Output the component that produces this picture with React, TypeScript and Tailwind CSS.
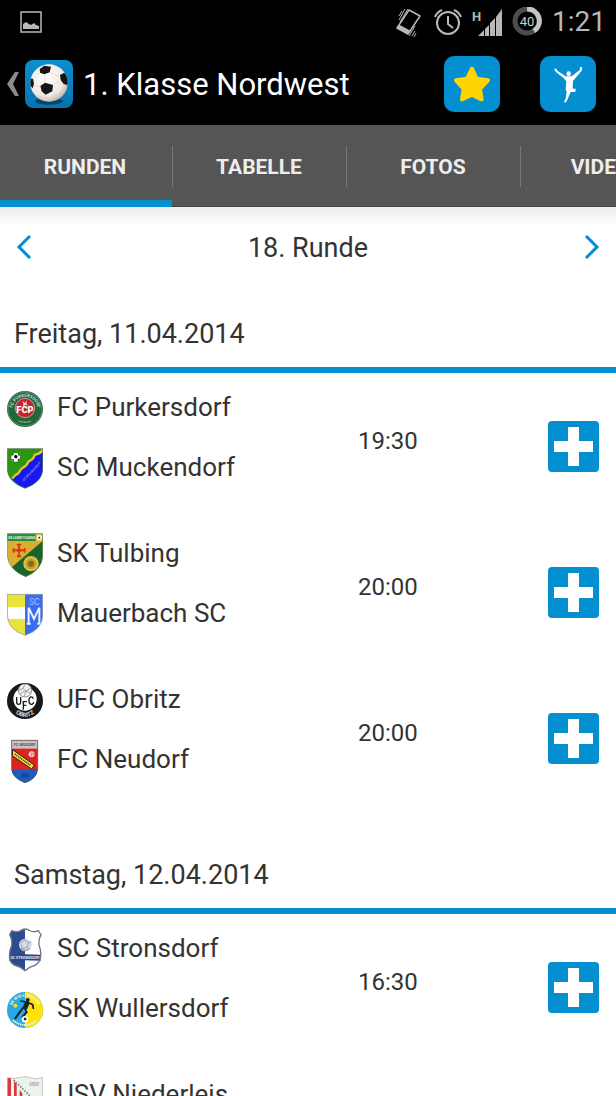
import { useState } from "react";
import type { ReactNode } from "react";
import clsx from "clsx";

interface Team {
  name: string;
  crest: ReactNode;
}

interface Match {
  home: Team;
  away: Team;
  time: string;
}

interface MatchDay {
  date: string;
  matches: Match[];
}

function Crest({ children }: { children: ReactNode }) {
  return (
    <svg viewBox="0 0 108 132" className="w-9 h-11 shrink-0" fontFamily="Roboto, sans-serif" aria-hidden="true">
      {children}
    </svg>
  );
}

const purkersdorf = (
  <Crest>
    <circle cx="54" cy="66" r="54" fill="#22663a" />
    <circle cx="54" cy="66" r="51" fill="none" stroke="#7aa585" strokeWidth="2" />
    <path id="purk-top" d="M17 76A38 38 0 1 1 91 76" fill="none" />
    <text fontSize="13" fontWeight="700" fill="#c9dccc">
      <textPath href="#purk-top" startOffset="50%" textAnchor="middle">FC PURKERSDORF</textPath>
    </text>
    <circle cx="54" cy="63" r="29" fill="#c4242c" stroke="#e9cfcf" strokeWidth="2" />
    <path d="M47 42l6 6 7-7-2 9 5 5-9-1-6 5 1-8z" fill="#f3dddd" />
    <text x="54" y="78" fontSize="28" fontWeight="900" fill="#fff" textAnchor="middle">FCP</text>
    <path d="M36 102q18 7 36 0" fill="none" stroke="#8fb898" strokeWidth="5" strokeDasharray="3 2" />
  </Crest>
);

const muckendorf = (
  <Crest>
    <path d="M1 5H107V66Q107 104 54 124Q1 104 1 66Z" fill="#2a9612" />
    <path d="M107 12Q99 24 84 26Q78 42 64 47Q58 61 46 66Q38 74 34 82Q24 86 16 96Q28 112 54 124Q107 104 107 66Z" fill="#1717f2" />
    <path d="M107 9Q99 21 84 23Q78 39 64 44Q58 58 46 63Q38 71 34 79Q24 83 16 94" fill="none" stroke="#f2c41b" strokeWidth="7" />
    <circle cx="26" cy="31" r="13" fill="#fff" />
    <path d="M21 27l5-4 6 4-2 7h-7zM14 23l5-4v7zM34 20l5 6-6-1zM15 36l6 1-1 6zM38 34l-3 8-4-4z" fill="#111" />
    <text x="50" y="104" fontSize="11" fill="#b9b9d8" transform="rotate(-47 50 104)">SC Muckendorf</text>
    <path d="M1 5H107V66Q107 104 54 124Q1 104 1 66Z" fill="none" stroke="#4c6a52" strokeWidth="2" />
  </Crest>
);

const tulbing = (
  <Crest>
    <path d="M1 2H107V70Q104 112 56 131Q6 112 1 70Z" fill="#dcae2e" />
    <path d="M107 24V70Q104 112 56 131Q30 121 15 102Z" fill="#17642e" />
    <path d="M1 2H107V24H1Z" fill="#2e8b3d" />
    <text x="4" y="17" fontSize="9" fontWeight="700" fill="#f4f4df">SK LAGER TULBING</text>
    <path d="M86 2H107V24H86Z" fill="#d7c444" />
    <circle cx="97" cy="14" r="8" fill="#f5f5ee" />
    <circle cx="97" cy="14" r="3" fill="#333" />
    <path d="M36 34V72M18 52H54" stroke="#d9331d" strokeWidth="5" />
    <path d="M32 35H40M32 70H40M20 48V56M53 48V56" stroke="#d9331d" strokeWidth="6" strokeLinecap="round" />
    <circle cx="36" cy="52" r="6" fill="#d9331d" />
    <circle cx="72" cy="92" r="23" fill="#dfc044" />
    <circle cx="72" cy="92" r="16" fill="#c99b23" />
    <circle cx="72" cy="92" r="9" fill="#7f6b24" />
    <path d="M1 2H107V70Q104 112 56 131Q6 112 1 70Z" fill="none" stroke="#71884e" strokeWidth="2" />
  </Crest>
);

const mauerbach = (
  <Crest>
    <path d="M1 4H54V127Q1 110 1 66Z" fill="#e8e43a" />
    <path d="M54 4H107V66Q107 110 54 127Z" fill="#3b6cf0" />
    <path d="M2 43H54V78H4Z" fill="#fff" />
    <text x="82" y="35" fontSize="25" fill="#a9c2fb" textAnchor="middle">SC</text>
    <path d="M65 92V44L81 78L97 44V92M59 92H71M91 92H103" fill="none" stroke="#e8effd" strokeWidth="6" />
    <path d="M1 4H107V66Q107 110 54 127Q1 110 1 66Z" fill="none" stroke="#8794a4" strokeWidth="2" />
  </Crest>
);

const obritz = (
  <Crest>
    <circle cx="54" cy="66" r="54" fill="#15191b" />
    <circle cx="54" cy="60" r="35" fill="#fff" />
    <circle cx="54" cy="34" r="20" fill="#f1f1f1" stroke="#555" strokeWidth="2" />
    <path d="M36 34l12-6 8 8 15-8M48 28l6-13M56 36l-4 14M56 36l14 6M40 44l12-7" fill="none" stroke="#777" strokeWidth="2" />
    <path d="M29 54V70Q29 76 35 76T41 70V54M49 92V68H60M49 79H58M79 59Q77 53 71 54Q65 57 66 66Q66 76 73 76Q79 76 80 69" fill="none" stroke="#1c1c1c" strokeWidth="4" />
    <path id="obritz-low" d="M14 92Q54 136 94 92" fill="none" />
    <text fontSize="18" fontWeight="700" fill="#d9d9d9">
      <textPath href="#obritz-low" startOffset="50%" textAnchor="middle">OBRITZ</textPath>
    </text>
  </Crest>
);

const neudorf = (
  <Crest>
    <path d="M14 4H92V92Q88 120 54 131Q18 118 14 92Z" fill="#e0211f" />
    <path d="M14 4H92V29H14Z" fill="#c4c4c4" />
    <text x="53" y="21" fontSize="11" fontWeight="700" fill="#555" textAnchor="middle">FC NEUDORF</text>
    <path d="M14 92H92Q88 120 54 131Q18 118 14 92Z" fill="#1c5cc0" />
    <path d="M17 32L82 78L74 90L16 50Z" fill="#f4e33b" stroke="#222" strokeWidth="3" />
    <path d="M23 45L72 80" stroke="#554c16" strokeWidth="5" strokeDasharray="4 2" />
    <circle cx="74" cy="46" r="9" fill="#f0d5d5" />
    <path d="M70 41l6 4-4 7M78 40l4 9" stroke="#b33" strokeWidth="2" fill="none" />
    <path d="M43 102H65V116H43Z" fill="#174a96" />
    <path d="M14 4H92V92Q88 120 54 131Q18 118 14 92Z" fill="none" stroke="#4a4a4a" strokeWidth="2" />
  </Crest>
);

const stronsdorf = (
  <Crest>
    <path d="M14 8Q28 14 38 9Q48 3 54 3Q62 3 70 9Q82 14 94 8L102 20Q94 34 96 52Q106 74 98 98Q88 114 70 117L54 128L38 117Q16 112 9 98Q4 74 14 52Q16 34 8 20Z" fill="#fff" />
    <path d="M14 8Q28 14 38 9Q48 3 54 3V128L38 117Q16 112 9 98Q4 74 14 52Q16 34 8 20Z" fill="#2d4b90" />
    <circle cx="55" cy="51" r="19" fill="#d8dbe5" />
    <path d="M40 45l12-8 12 7-3 14-14 4zM52 37l2-6M64 44l9-2M61 58l7 6" fill="none" stroke="#9fa6b8" strokeWidth="3" />
    <path d="M42 62q12 10 25 2" stroke="#a78a86" strokeWidth="3" fill="none" />
    <path d="M7 80Q54 77 101 80V98Q54 95 8 98Z" fill="#294788" />
    <text x="54" y="92" fontSize="11" fontWeight="700" fill="#e5eaf5" textAnchor="middle">SC STRONSDORF</text>
    <path d="M14 8Q28 14 38 9Q48 3 54 3Q62 3 70 9Q82 14 94 8L102 20Q94 34 96 52Q106 74 98 98Q88 114 70 117L54 128L38 117Q16 112 9 98Q4 74 14 52Q16 34 8 20Z" fill="none" stroke="#73777f" strokeWidth="4" />
  </Crest>
);

const wullersdorf = (
  <Crest>
    <circle cx="54" cy="66" r="54" fill="#29a9e1" />
    <path d="M54 12A54 54 0 0 1 54 120Z" fill="#ffe20a" />
    <path id="wull-top" d="M13 66A41 41 0 0 1 95 66" fill="none" />
    <text fontSize="12" fontWeight="700" fill="#f4f7e0">
      <textPath href="#wull-top" startOffset="50%" textAnchor="middle">SK WULLERSDORF</textPath>
    </text>
    <path d="M18 97Q54 125 90 97" fill="none" stroke="#eef4d2" strokeWidth="6" strokeDasharray="4 2" />
    <circle cx="25" cy="53" r="6" fill="#ffdf1b" />
    <circle cx="62" cy="36" r="6" fill="#15222c" />
    <path d="M42 39L62 43L77 50L79 61" stroke="#15222c" strokeWidth="5" fill="none" strokeLinecap="round" />
    <path d="M54 41L68 46L60 64L46 62Z" fill="#15222c" />
    <path d="M48 60L37 74L25 91M54 62L59 72L46 88" stroke="#15222c" strokeWidth="6" fill="none" strokeLinecap="round" />
    <circle cx="54" cy="94" r="10" fill="#fff" />
    <path d="M50 92l4-4 5 4-2 5h-5z" fill="#222" />
  </Crest>
);

const niederleis = (
  <Crest>
    <path d="M2 11Q14 13 22 13L54 8L88 15L107 10V90Q104 114 54 130Q4 114 2 90Z" fill="#eef2ec" stroke="#aaa" strokeWidth="2" />
    <path d="M2 12L12 13V110L2 90ZM21 22L29 28V122L21 116ZM38 48L46 58V126L38 124Z" fill="#d43a3f" />
    <path d="M20 18L104 100" stroke="#87958d" strokeWidth="6" strokeDasharray="5 4" />
    <text x="82" y="37" fontSize="15" fontWeight="700" fill="#9aa3a0" textAnchor="middle">USV</text>
  </Crest>
);

const matchDays: MatchDay[] = [
  {
    date: "Freitag, 11.04.2014",
    matches: [
      { home: { name: "FC Purkersdorf", crest: purkersdorf }, away: { name: "SC Muckendorf", crest: muckendorf }, time: "19:30" },
      { home: { name: "SK Tulbing", crest: tulbing }, away: { name: "Mauerbach SC", crest: mauerbach }, time: "20:00" },
      { home: { name: "UFC Obritz", crest: obritz }, away: { name: "FC Neudorf", crest: neudorf }, time: "20:00" },
    ],
  },
  {
    date: "Samstag, 12.04.2014",
    matches: [
      { home: { name: "SC Stronsdorf", crest: stronsdorf }, away: { name: "SK Wullersdorf", crest: wullersdorf }, time: "16:30" },
    ],
  },
];

const tabs = ["RUNDEN", "TABELLE", "FOTOS", "VIDEOS"];

function StatusBar() {
  return (
    <div className="flex items-center h-[43px] pl-5 pr-[10px] gap-[10px] text-[#b8b8b8]">
      <svg viewBox="0 0 22 22" className="w-[22px] h-[22px] mr-auto" aria-hidden="true">
        <rect x="1" y="1" width="20" height="20" fill="none" stroke="currentColor" strokeWidth="1.5" />
        <path d="M3 18V13L6 11L9 13L11 14L14 12L16 14L19 15V18Z" fill="currentColor" />
      </svg>
      {/* Vibrate */}
      <svg viewBox="0 0 30 32" className="w-[30px] h-8" fill="none" stroke="currentColor" aria-hidden="true">
        <path d="M15 4L26 10L14 28L3 22Z" strokeWidth="1.5" strokeLinejoin="round" />
        <path d="M3 22L14 28L16 25L5 19Z" fill="currentColor" />
        <path d="M5 14L11 3M6 16L14 3M5 10L8 5M15 30L21 20M18 30L21 25M20 31L22 27" strokeWidth="1" />
      </svg>
      {/* Alarm */}
      <svg viewBox="0 0 28 28" className="w-7 h-7" fill="none" stroke="currentColor" strokeWidth="2" aria-hidden="true">
        <circle cx="14" cy="15" r="11" />
        <path d="M14 8V16L19 20M1 9Q3 4 8 2M27 9Q25 4 20 2" />
      </svg>
      {/* Signal strength */}
      <svg viewBox="0 0 30 30" className="w-[30px] h-[30px]" fill="currentColor" aria-hidden="true">
        <path d="M6 29L12 23V29ZM13 22L17 18V29H13ZM18 16L23 11V29H18ZM24 10L30 2V29H24Z" />
        <text x="0" y="14" fontSize="13" fontWeight="700" fontFamily="Roboto, sans-serif">H</text>
      </svg>
      {/* Battery */}
      <svg viewBox="0 0 30 30" className="w-[30px] h-[30px]" fill="none" aria-hidden="true">
        <circle cx="15" cy="14" r="12" stroke="#4c4c4c" strokeWidth="5" />
        <path d="M15 2A12 12 0 0 1 22 24" stroke="#c4c4c4" strokeWidth="5" />
        <text x="15" y="19" fontSize="13" fontFamily="Roboto, sans-serif" fill="#d0d0d0" textAnchor="middle">40</text>
      </svg>
      <span className="text-[28px] leading-8">1:21</span>
    </div>
  );
}

function BallLogo() {
  return (
    <svg viewBox="0 0 144 144" className="w-12 h-12" aria-hidden="true">
      <defs>
        <linearGradient id="tile" x1="0" y1="0" x2="0" y2="1">
          <stop offset="0" stopColor="#0a8fd0" />
          <stop offset="1" stopColor="#0872ac" />
        </linearGradient>
        <radialGradient id="ball" cx="0.4" cy="0.35" r="0.7">
          <stop offset="0" stopColor="#fff" />
          <stop offset="0.7" stopColor="#f0e9e4" />
          <stop offset="1" stopColor="#bfaea4" />
        </radialGradient>
        <clipPath id="ball-clip">
          <circle cx="72" cy="69" r="56" />
        </clipPath>
      </defs>
      <rect width="144" height="144" rx="24" fill="url(#tile)" />
      <ellipse cx="72" cy="124" rx="42" ry="10" fill="#03334f" opacity="0.7" />
      <circle cx="72" cy="69" r="56" fill="url(#ball)" />
      <g clipPath="url(#ball-clip)">
        <path d="M44 27L58 17L78 20L74 37L58 43L45 38ZM46 78L60 68L84 75L82 94L62 104L50 94ZM105 45L118 38L130 52V76L116 72L107 60ZM14 56L24 56L27 72L23 84L14 76Z" fill="#151515" />
        <path d="M58 43L60 68M74 37L105 50M84 75L107 62M46 80L26 76M45 38L24 57M82 94L102 112M62 104L56 122" fill="none" stroke="#ddd5d0" strokeWidth="2" />
      </g>
    </svg>
  );
}

function ActionBar() {
  return (
    <header className="flex items-center h-[82px] pl-[7px] pr-5 text-white">
      <button className="flex items-center gap-[6px] shrink-0" aria-label="Zurück">
        <svg viewBox="0 0 12 26" className="w-3 h-[26px]" fill="#8b8b8b" aria-hidden="true">
          <path d="M8 1H12L6 13L12 25H8L0 13Z" />
        </svg>
        <BallLogo />
      </button>
      <h1 className="flex-1 pl-[10px] pt-[2px] text-[31px] leading-10 truncate">1. Klasse Nordwest</h1>
      <div className="flex gap-10 shrink-0">
        <button className="w-14 h-14 rounded-[10px] bg-[#038fd0]" aria-label="Favorit">
          <svg viewBox="0 0 168 168" className="w-full h-full" aria-hidden="true">
            <path d="M84 38L98 68L132 73L108 99L113 130L84 116L54 130L59 99L36 73L69 68Z" fill="#ffd400" stroke="#ffd400" strokeWidth="12" strokeLinejoin="round" />
          </svg>
        </button>
        <button className="w-14 h-14 rounded-[10px] bg-[#038fd0]" aria-label="Spieler">
          <svg viewBox="0 0 168 168" className="w-full h-full" fill="#fff" aria-hidden="true">
            <path d="M42 38L49 38L52 44L77 61L95 61L119 42L120 33L127 34L125 44L99 75L98 98L107 98L106 108L92 108L82 132L76 140L72 138L77 127L80 107L77 101L79 76L68 64L47 47Z" />
            <circle cx="86" cy="53" r="7" />
          </svg>
        </button>
      </div>
    </header>
  );
}

function TeamLine({ team }: { team: Team }) {
  return (
    <div className="flex items-center h-[60px]">
      {team.crest}
      <span className="pl-[14px] pb-1 text-[26px] leading-8 whitespace-nowrap">{team.name}</span>
    </div>
  );
}

function MatchRow({ match }: { match: Match }) {
  return (
    <li className="flex items-center h-[146px] pl-[7px] pr-[17px]">
      <div className="flex-1 min-w-0 pb-[14px]">
        <TeamLine team={match.home} />
        <TeamLine team={match.away} />
      </div>
      <time className="w-[190px] pb-[10px] text-2xl leading-8">{match.time}</time>
      <button
        className="w-[51px] h-[51px] rounded shrink-0 bg-[#038fd0]"
        aria-label={`${match.home.name} – ${match.away.name} hinzufügen`}
      >
        <svg viewBox="0 0 51 51" className="w-full h-full" aria-hidden="true">
          <path d="M20 6H31V20H45V31H31V45H20V31H6V20H20Z" fill="#fff" />
        </svg>
      </button>
    </li>
  );
}

export default function App() {
  const [activeTab, setActiveTab] = useState("RUNDEN");

  return (
    <div className="h-screen overflow-hidden bg-white text-[#333] font-['Roboto',sans-serif]">
      <div className="bg-black">
        <StatusBar />
        <ActionBar />
      </div>

      {/* Tabs */}
      <nav className="flex h-[82px] overflow-hidden bg-[#555] shadow-[inset_0_-1px_#444]">
        {tabs.map((tab) => (
          <button
            key={tab}
            onClick={() => setActiveTab(tab)}
            className="flex flex-col w-[174px] shrink-0 text-[21px] leading-7 font-bold text-[#eee]"
          >
            <span className="flex items-center justify-center w-[173px] h-[41px] mt-[21px] pr-[2px] border-r border-[#777]">
              {tab}
            </span>
            <span className={clsx("w-[172px] h-[7px] mt-auto", activeTab === tab && "bg-[#038fd0]")} />
          </button>
        ))}
      </nav>

      {/* Round picker */}
      <div className="flex items-center justify-between h-[63px] px-4 pt-[17px] bg-linear-to-b from-[#ececec] to-white to-30%">
        <button aria-label="Vorherige Runde">
          <svg viewBox="0 0 16 24" className="w-4 h-6" fill="none" stroke="#038fd0" strokeWidth="3" aria-hidden="true">
            <path d="M14 1L3 12L14 23" />
          </svg>
        </button>
        <h2 className="pt-[2px] text-[27px] leading-8">18. Runde</h2>
        <button aria-label="Nächste Runde">
          <svg viewBox="0 0 16 24" className="w-4 h-6" fill="none" stroke="#038fd0" strokeWidth="3" aria-hidden="true">
            <path d="M2 1L13 12L2 23" />
          </svg>
        </button>
      </div>

      {matchDays.map((day) => (
        <section key={day.date}>
          <h3 className="h-[103px] pl-[14px] pt-12 text-[27px] leading-8 border-b-6 border-[#038fd0]">
            {day.date}
          </h3>
          <ul>
            {day.matches.map((match) => (
              <MatchRow key={match.home.name} match={match} />
            ))}
          </ul>
        </section>
      ))}

      <div className="pl-[7px] pt-[6px]">
        <TeamLine team={{ name: "USV Niederleis", crest: niederleis }} />
      </div>
    </div>
  );
}
